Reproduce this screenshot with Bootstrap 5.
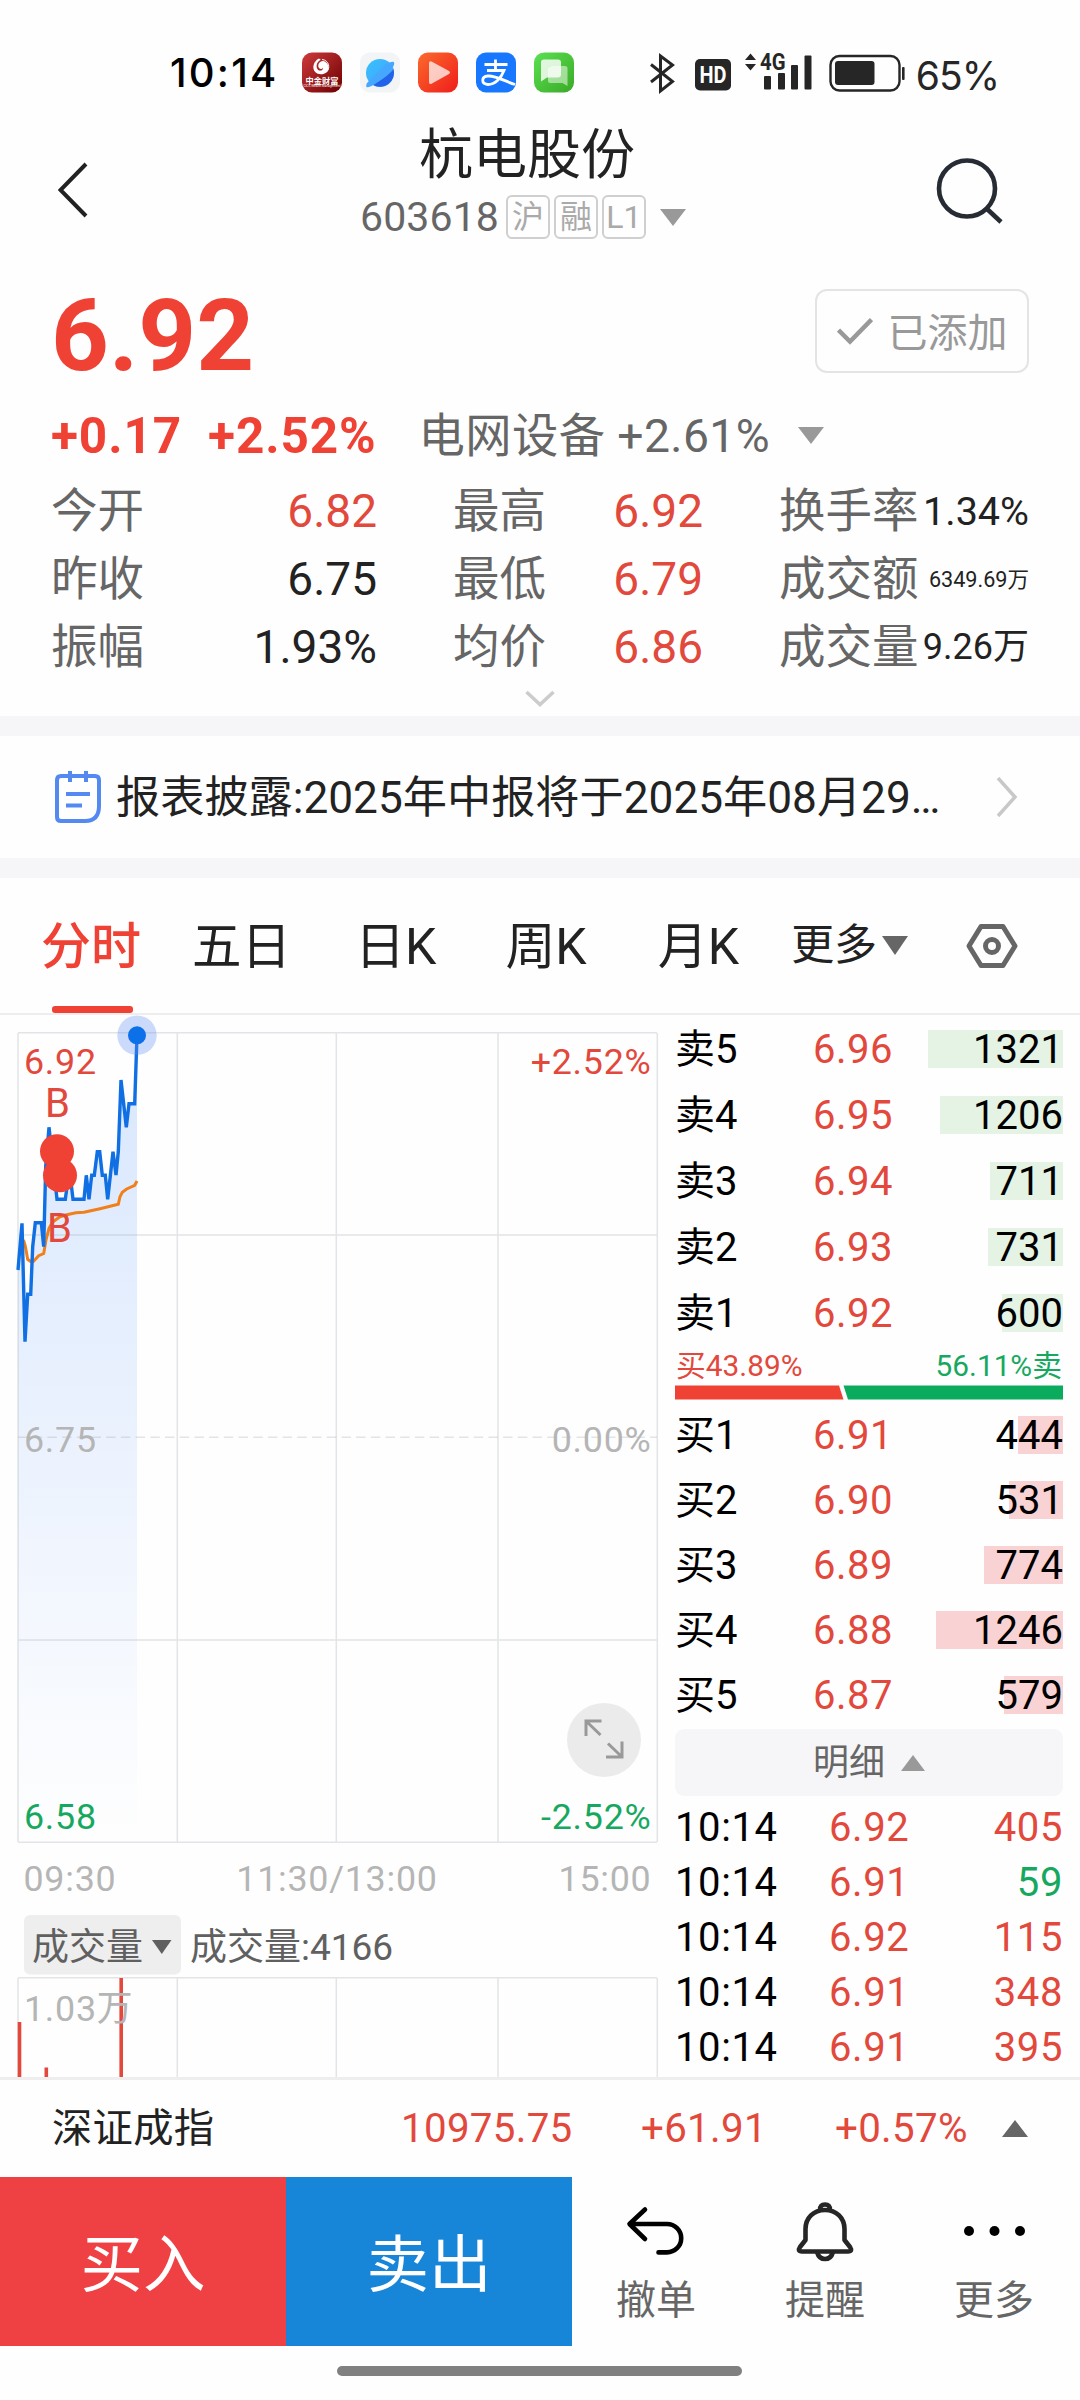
<!DOCTYPE html>
<html lang="zh-CN">
<head>
<meta charset="utf-8">
<meta name="viewport" content="width=device-width, initial-scale=1">
<title>杭电股份 603618</title>
<link rel="stylesheet" href="https://cdn.jsdelivr.net/npm/bootstrap@5.3.0/dist/css/bootstrap.min.css">
<style>
  body { width: 1080px; height: 2400px; overflow: hidden; background: #fefefe; color: #222; font-family: Roboto, "Noto Sans CJK SC", sans-serif; font-size: 40px; line-height: 1; }
  svg { display: block; flex: none; }
  svg text { font-family: Roboto, "Noto Sans CJK SC", sans-serif; }
  .up { color: #e2483b; }
  .down { color: #17a860; }

  .status { height: 110px; padding: 0 81px 0 170px; }
  .status .clock { font: 500 40px/70px Inter, sans-serif; color: #000; width: 132px; letter-spacing: 2.2px; padding-top: 38px; }
  .status .power { font: 400 39px/70px Inter, sans-serif; color: #262626; letter-spacing: -1px; padding-top: 41px; }

  .topbar { height: 150px; padding: 0 77px 0 58px; }
  .topbar h1 { font-size: 54px; line-height: 76px; font-weight: 400; padding: 8px 0 0 8px; }
  .topbar .code { font-size: 41px; line-height: 46px; letter-spacing: .1px; color: #666; }
  .flag { width: 44px; height: 44px; border: 2px solid #cfcfcf; border-radius: 6px; font-size: 32px; line-height: 40px; color: #aaa; text-align: center; letter-spacing: 0; }

  .quote { height: 456px; padding: 29px 51px 0 51px; }
  .last { font-size: 101px; line-height: 94px; height: 84px; font-weight: 700; color: #ef4134; }
  .added { width: 214px; height: 84px; border: 2px solid #e4e4e4; border-radius: 12px; font-size: 40px; line-height: 84px; color: #999; }
  .added span { padding-top: 5px; }
  .change { height: 72px; margin-top: 26px; font-size: 49.5px; line-height: 77px; font-weight: 700; color: #ef4134; letter-spacing: .9px; }
  .change span { padding-top: 2px; }
  .change .sector { font-size: 46.3px; font-weight: 400; color: #666; letter-spacing: .4px; }
  .stats { grid-template-columns: 326px 250px 250px; column-gap: 76px; margin-top: 5px; }
  .stat { height: 68px; line-height: 71px; font-size: 46px; }
  .stat .name { color: #666; font-size: 46.5px; white-space: nowrap; }

  .band { height: 20px; background: #f6f6f9; }
  .news { height: 122px; padding: 0 62px 0 54px; font-size: 44.2px; line-height: 126px; }
  .news span { padding-top: 2px; }

  .tabs { height: 137px; border-bottom: 2px solid #eee; font-size: 50px; line-height: 139px; }
  .tabs .tab { position: relative; height: 135px; }
  .tabs .on { font-weight: 500; color: #ef4134; }
  .tabs .on::after { content: ""; position: absolute; left: 11px; bottom: 0; width: 81px; height: 7px; border-radius: 3px; background: #ef4134; }

  .market { height: 1065px; border-bottom: 3px solid #eee; overflow: hidden; }
  .book { width: 388px; margin-left: 11px; padding-top: 2px; color: #000; }
  .lvl { height: 66px; line-height: 66px; font-size: 40px; }
  .lvl.bid { height: 65px; line-height: 65px; }
  .lvl .no { width: 138px; }
  .lvl .up { letter-spacing: .5px; }
  .depth { position: relative; }
  .depth i { position: absolute; right: 0; top: 13px; height: 38px; background: #e4f3e4; }
  .bid .depth i { background: #f9d3d3; }
  .depth b { position: relative; font-weight: 400; }
  .share { font-size: 29.8px; line-height: 38px; height: 38px; padding: 0 1px; }
  .detail { height: 67px; margin-top: 1px; border-radius: 9px; background: #f6f6f9; font-size: 36px; line-height: 74px; color: #666; }
  .tick { height: 55px; line-height: 58px; font-size: 40px; letter-spacing: .6px; }
  .tick .at { width: 154px; }

  .index { height: 97px; padding: 0 52px 0 52px; font-size: 40.3px; line-height: 104px; letter-spacing: .3px; }
  .trade { width: 286px; height: 169px; border-radius: 0; border: 0; color: #fff; font-size: 62.5px; line-height: 178px; padding: 0; }
  .buy { background: #ef4143; }
  .sell { background: #1886d8; }
  .act { height: 169px; width: 169px; font-size: 40px; color: #666; padding: 23px 1px 0 0; }
  .act span { line-height: 44px; margin-top: 15px; }
  .homebar { width: 405px; height: 10px; border-radius: 5px; background: #808080; margin: 20px 0 0 337px; }
</style>
<script src="https://cdn.jsdelivr.net/npm/bootstrap@5.3.0/dist/js/bootstrap.bundle.min.js"></script>
</head>
<body>

<div class="status d-flex align-items-start">
  <span class="clock">10:14</span>
  <svg width="272" height="110" viewBox="302 0 272 110">
    <defs>
      <linearGradient id="gr" x1="0" y1="0" x2="1" y2="1"><stop stop-color="#cf3a3c"/><stop offset="1" stop-color="#6d0000"/></linearGradient>
      <linearGradient id="go" x1="0" y1="0" x2="1" y2="1"><stop stop-color="#fb6a2c"/><stop offset="1" stop-color="#ef1d1b"/></linearGradient>
      <linearGradient id="gg" x1="0" y1="0" x2="1" y2="1"><stop stop-color="#5be052"/><stop offset="1" stop-color="#3aaa26"/></linearGradient>
      <linearGradient id="gb" x1="0" y1="0" x2="1" y2="1"><stop stop-color="#35c3fb"/><stop offset="1" stop-color="#4a9dff"/></linearGradient>
    </defs>
    <rect x="302" y="52.500" width="40" height="40" rx="10" fill="url(#gr)"/>
    <path fill="#fff" fill-rule="evenodd" d="M319 58.500c-8 4-7.500 15.500 2 15.800 9 0 10-11 2.500-13.300-4-.5-6.500 4-4.500 7 1 1.500 3.500 1.200 4-.6.800 3-4 4.600-5.600 1.600-1.800-3.500-.2-7.500 3.400-9.300z"/>
    <path d="M322 59.500c7 .5 9 9 4 13" fill="none" stroke="#fff" stroke-width="1"/>
    <text x="322" y="83.500" font-size="8.200" font-weight="700" fill="#fff" text-anchor="middle">中金财富</text>
    <text x="322" y="86.500" font-size="3.200" fill="#fff" text-anchor="middle">CICC Wealth Management</text>
    <rect x="360" y="52.500" width="40" height="40" rx="10" fill="#f3f4f5"/>
    <circle cx="380" cy="73" r="14" fill="url(#gb)"/>
    <path d="M393.500 69a14 14 0 0 1-21 15.600C382 80 389 75 393.500 69z" fill="#2462ea"/>
    <path d="M367 83c-3 7 3 4 8 1 8-5 15-12 18-17 4-8-3-5-7-3" fill="#46a7ff"/>
    <rect x="418" y="52.500" width="40" height="40" rx="10" fill="url(#go)"/>
    <path d="M429 63.500q0-3.500 3-1.700l17 9.200q2 1.500 0 3l-17 9.500q-3 1.500-3-1.500z" fill="#fff" opacity=".72"/>
    <rect x="476" y="52.500" width="40" height="40" rx="10" fill="#1777ff"/>
    <g fill="none" stroke="#fff" stroke-width="2.800"><path d="M484.500 64.500h23M495.500 59.500v10M487 70.500h17c-3 8-9 14-16 14-7-.5-7-8 0-8.500 8-.5 16 5 27 8.500"/></g>
    <rect x="534" y="52.500" width="40" height="40" rx="10" fill="url(#gg)"/>
    <path d="M553 66h12q2.500 0 2.500 2.500V86l-5-3H550q-2-.2-2-2V68z" fill="#fff" opacity=".5"/>
    <path d="M544 59.500h14q3 0 3 3v12q0 3-3 3h-11l-6 4V62q0-2.500 3-2.500z" fill="#fff" opacity=".82"/>
  </svg>
  <svg class="ms-auto" width="266" height="110" viewBox="643 0 266 110" fill="#262626">
    <path d="M652 64.500l21.500 17-12 9.500V56l12 9-21.500 17" fill="none" stroke="#262626" stroke-width="3"/>
    <rect x="696" y="59" width="36" height="31.500" rx="5"/>
    <text x="714" y="83" font-size="24" font-weight="700" fill="#fff" text-anchor="middle" textLength="27" lengthAdjust="spacingAndGlyphs">HD</text>
    <path d="M751.500 53.500l5.500 6.500h-11zM751.500 70.500l5.500-6.500h-11z"/>
    <text x="761" y="70" font-size="23" font-weight="700" textLength="25.500" lengthAdjust="spacingAndGlyphs">4G</text>
    <rect x="765" y="76" width="7" height="13.500" rx="1"/><rect x="779" y="73" width="7" height="16.500" rx="1"/><rect x="792" y="65" width="7" height="24.500" rx="1"/><rect x="805.500" y="55.500" width="7" height="34" rx="1"/>
    <rect x="831.500" y="56" width="69" height="34.500" rx="9" fill="none" stroke="#262626" stroke-width="2.400"/>
    <rect x="836" y="61" width="39.500" height="24" rx="3"/><rect x="903" y="67" width="2.600" height="13" rx="1"/>
  </svg>
  <span class="power ps-2">65%</span>
</div>

<header class="topbar d-flex justify-content-between">
  <svg width="32" height="150" viewBox="58 110 32 150"><path d="M86 164L60.500 190 86 216" fill="none" stroke="#222" stroke-width="4"/></svg>
  <div class="d-flex flex-column align-items-center ms-3 ps-1">
    <h1 class="m-0">杭电股份</h1>
    <div class="code d-flex align-items-center">603618<span class="flag" style="margin-left:7px">沪</span><span class="flag ms-1">融</span><span class="flag ms-1">L1</span>
      <svg style="margin-left:14px" width="26" height="17" viewBox="0 0 26 17"><path d="M0 0h26L13 17z" fill="#999"/></svg></div>
  </div>
  <svg width="67" height="150" viewBox="936 110 67 150" fill="none" stroke="#272b33" stroke-width="4.600"><circle cx="967" cy="188.500" r="28"/><path d="M986 208l15 14"/></svg>
</header>

<section class="quote">
  <div class="d-flex justify-content-between">
    <div class="last">6.92</div>
    <div class="added d-flex align-items-center justify-content-center">
      <svg width="36" height="28" viewBox="0 0 36 28"><path d="M1.500 13L13 24.500 34.500 2.500" fill="none" stroke="#999" stroke-width="4.500"/></svg>
      <span style="margin-left:15px">已添加</span>
    </div>
  </div>
  <div class="change d-flex align-items-center">
    <span>+0.17</span><span style="margin-left:26px">+2.52%</span>
    <span class="sector" style="margin-left:42px">电网设备 +2.61%</span>
    <svg style="margin-left:28px" width="26" height="17" viewBox="0 0 26 17"><path d="M0 0h26L13 17z" fill="#999"/></svg>
  </div>
  <div class="stats d-grid">
    <div class="stat d-flex justify-content-between"><span class="name">今开</span><span class="up">6.82</span></div>
    <div class="stat d-flex justify-content-between"><span class="name">最高</span><span class="up">6.92</span></div>
    <div class="stat d-flex justify-content-between"><span class="name">换手率</span><span style="font-size:39.5px">1.34%</span></div>
    <div class="stat d-flex justify-content-between"><span class="name">昨收</span><span>6.75</span></div>
    <div class="stat d-flex justify-content-between"><span class="name">最低</span><span class="up">6.79</span></div>
    <div class="stat d-flex justify-content-between"><span class="name">成交额</span><span style="font-size:21.6px">6349.69万</span></div>
    <div class="stat d-flex justify-content-between"><span class="name">振幅</span><span>1.93%</span></div>
    <div class="stat d-flex justify-content-between"><span class="name">均价</span><span class="up">6.86</span></div>
    <div class="stat d-flex justify-content-between"><span class="name">成交量</span><span style="font-size:36px">9.26万</span></div>
  </div>
  <svg class="mx-auto" style="margin-top:10px" width="30" height="17" viewBox="0 0 30 17"><path d="M1.500 2L15 14.500 28.500 2" fill="none" stroke="#ccc" stroke-width="3.500"/></svg>
</section>

<div class="band"></div>
<div class="news d-flex align-items-center">
  <svg width="48" height="54" viewBox="54 770 48 54" fill="none" stroke="#5389f1" stroke-width="4"><path d="M61 776h34q4 0 4 4v26q0 15-14 15H61q-4 0-4-4v-37q0-4 4-4zM70 771v11M86 771v11M66 794h24M66 805.500h16"/></svg>
  <span style="margin-left:14px">报表披露:2025年中报将于2025年08月29…</span>
  <svg class="ms-auto" width="22" height="40" viewBox="0 0 22 40"><path d="M2 1l17 19L2 39" fill="none" stroke="#c8c8c8" stroke-width="3.500"/></svg>
</div>
<div class="band"></div>

<nav class="tabs d-flex align-items-center">
  <span class="tab on" style="margin-left:41px">分时</span>
  <span class="tab" style="margin-left:51px;font-size:49.500px">五日</span>
  <span class="tab" style="margin-left:64px">日K</span>
  <span class="tab" style="margin-left:69px">周K</span>
  <span class="tab" style="margin-left:71px">月K</span>
  <span class="tab d-flex align-items-center" style="margin-left:52px;font-size:43px">更多<svg style="margin-left:5px" width="26" height="19" viewBox="0 0 26 19"><path d="M0 0h26L13 19z" fill="#666"/></svg></span>
  <svg class="ms-auto" style="margin-right:50px" width="76" height="48" viewBox="954 921 76 48" fill="none" stroke="#666" stroke-width="5"><path d="M981 925.500h22l12 19.500-12 19.500h-22L969 945z" stroke-linejoin="round"/><circle cx="992" cy="945" r="6.500"/></svg>
</nav>

<main class="market d-flex">
  <svg width="664" height="1062" viewBox="0 1015 664 1062">
    <defs><linearGradient id="area" gradientUnits="userSpaceOnUse" x1="0" y1="1035" x2="0" y2="1842"><stop stop-color="#d8e7fd"/><stop offset=".5" stop-color="#ebf2fe"/><stop offset="1" stop-color="#fefefe"/></linearGradient></defs>
    <path fill="url(#area)" d="M18 1270L22 1223.300 25 1341.700 27.700 1294.300H30.700L32.700 1246.700 35.300 1222.700H41.300L43.700 1246.700 45.700 1166.700 49 1127.300 54.300 1175 57 1199.300H65.300L68 1180H70.700L73 1199.300H84L86.300 1175.300 89 1199.300 91.700 1175.300H94.300L97.300 1151.700H99.700L102.300 1175.300H105.300L107.700 1199.300 113 1151.700 116 1175 118.300 1151.700 121 1080 126.300 1127.300 129 1103.700H134.700L137 1035.300V1842H18z"/>
    <g stroke="#808a96" stroke-opacity=".22" stroke-width="1.500" fill="none">
      <path d="M18 1032.800H657M18 1235H657M18 1640H657M18 1842.300H657M18 1033V1842M177.300 1033V1842M336.300 1033V1842M498 1033V1842M657.300 1033V1842"/>
      <path d="M18 1437.300H657" stroke-dasharray="9.500 5.200"/>
      <path d="M18 1977.800H657M18 1978V2078M177.300 1978V2078M336.300 1978V2078M498 1978V2078M657.300 1978V2078"/>
    </g>
    <path fill="none" stroke="#f0801c" stroke-width="3" d="M23.500 1240L25.300 1246 27.700 1259.300 30.700 1261.500H33.300L38.700 1255.700 43.700 1253.500 46 1240 49 1228.300 52.700 1222 60 1216.700 66.700 1214.700 76 1212.700 84 1212.300 100 1208.700 118.300 1204.300 120 1196.700 122.300 1192.300 126.700 1189 134.700 1185.300 137 1181"/>
    <path fill="none" stroke="#1070e3" stroke-width="3.400" d="M18 1270L22 1223.300 25 1341.700 27.700 1294.300H30.700L32.700 1246.700 35.300 1222.700H41.300L43.700 1246.700 45.700 1166.700 49 1127.300 54.300 1175 57 1199.300H65.300L68 1180H70.700L73 1199.300H84L86.300 1175.300 89 1199.300 91.700 1175.300H94.300L97.300 1151.700H99.700L102.300 1175.300H105.300L107.700 1199.300 113 1151.700 116 1175 118.300 1151.700 121 1080 126.300 1127.300 129 1103.700H134.700L137 1035.300"/>
    <circle cx="137" cy="1035.300" r="19.700" fill="#5a8cf5" fill-opacity=".31"/><circle cx="137" cy="1035.300" r="9" fill="#0c70e8"/>
    <g fill="#ef4134"><circle cx="57" cy="1151.300" r="17"/><circle cx="60" cy="1175.300" r="17"/></g>
    <g font-size="40" fill="#e2483b"><text x="45" y="1116.700">B</text><text x="47" y="1241.700">B</text></g>
    <g font-size="35.800" letter-spacing=".75">
      <text x="24" y="1074" fill="#e2483b">6.92</text><text x="651.500" y="1074" fill="#e2483b" text-anchor="end">+2.52%</text>
      <text x="24" y="1451.500" fill="#b5b5b5">6.75</text><text x="651.500" y="1451.500" fill="#b5b5b5" text-anchor="end">0.00%</text>
      <text x="24" y="1828.500" fill="#17a860">6.58</text><text x="651.500" y="1828.500" fill="#17a860" text-anchor="end">-2.52%</text>
      <g fill="#b5b5b5"><text x="23.500" y="1891">09:30</text><text x="337" y="1891" text-anchor="middle">11:30/13:00</text><text x="651.500" y="1891" text-anchor="end">15:00</text></g>
    </g>
    <circle cx="604" cy="1740" r="37" fill="#ebebeb"/>
    <path d="M601.500 1721H586V1736M586.500 1721.500L600.500 1735M606 1757H622V1741.500M621.500 1756.500L608 1743.500" fill="none" stroke="#999" stroke-width="3"/>
    <rect x="24" y="1915" width="157" height="59.500" rx="6" fill="#eee"/>
    <g font-size="37" fill="#606060"><text x="32" y="1959.500">成交量</text><text x="190" y="1959.500">成交量:4166</text></g>
    <path d="M152 1940h19.500l-9.700 14z" fill="#606060"/>
    <path d="M19.500 2022V2078M46.300 2067.500V2078M121.200 1978V2078" stroke="#e2483b" stroke-width="3.600"/>
    <text x="24" y="2020.500" font-size="35.800" fill="#b5b5b5" letter-spacing=".75">1.03万</text>
  </svg>

  <div class="book">
    <div class="lvl d-flex"><span class="no">卖5</span><span class="up">6.96</span><span class="depth ms-auto"><i style="width:135px"></i><b>1321</b></span></div>
    <div class="lvl d-flex"><span class="no">卖4</span><span class="up">6.95</span><span class="depth ms-auto"><i style="width:123px"></i><b>1206</b></span></div>
    <div class="lvl d-flex"><span class="no">卖3</span><span class="up">6.94</span><span class="depth ms-auto"><i style="width:73px"></i><b>711</b></span></div>
    <div class="lvl d-flex"><span class="no">卖2</span><span class="up">6.93</span><span class="depth ms-auto"><i style="width:75px"></i><b>731</b></span></div>
    <div class="lvl d-flex"><span class="no">卖1</span><span class="up">6.92</span><span class="depth ms-auto"><i style="width:61px"></i><b>600</b></span></div>
    <div class="share d-flex justify-content-between"><span class="up">买43.89%</span><span class="down">56.11%卖</span></div>
    <svg width="388" height="18" viewBox="0 0 388 18"><path d="M0 .500H164L168.500 14.500H0z" fill="#ef4134"/><path d="M168.500 .500H388V14.500H173z" fill="#0aab5c"/></svg>
    <div class="lvl bid d-flex"><span class="no">买1</span><span class="up">6.91</span><span class="depth ms-auto"><i style="width:45px"></i><b>444</b></span></div>
    <div class="lvl bid d-flex"><span class="no">买2</span><span class="up">6.90</span><span class="depth ms-auto"><i style="width:54px"></i><b>531</b></span></div>
    <div class="lvl bid d-flex"><span class="no">买3</span><span class="up">6.89</span><span class="depth ms-auto"><i style="width:79px"></i><b>774</b></span></div>
    <div class="lvl bid d-flex"><span class="no">买4</span><span class="up">6.88</span><span class="depth ms-auto"><i style="width:127px"></i><b>1246</b></span></div>
    <div class="lvl bid d-flex"><span class="no">买5</span><span class="up">6.87</span><span class="depth ms-auto"><i style="width:59px"></i><b>579</b></span></div>
    <div class="detail d-flex align-items-center justify-content-center">明细<svg class="ms-3" width="24" height="16" viewBox="0 0 24 16"><path d="M12 0l12 16H0z" fill="#999"/></svg></div>
    <div style="padding-top:3px">
      <div class="tick d-flex"><span class="at">10:14</span><span class="up">6.92</span><span class="up ms-auto">405</span></div>
      <div class="tick d-flex"><span class="at">10:14</span><span class="up">6.91</span><span class="down ms-auto">59</span></div>
      <div class="tick d-flex"><span class="at">10:14</span><span class="up">6.92</span><span class="up ms-auto">115</span></div>
      <div class="tick d-flex"><span class="at">10:14</span><span class="up">6.91</span><span class="up ms-auto">348</span></div>
      <div class="tick d-flex"><span class="at">10:14</span><span class="up">6.91</span><span class="up ms-auto">395</span></div>
    </div>
  </div>
</main>

<div class="index d-flex align-items-center">
  <span style="width:349px">深证成指</span>
  <span class="up" style="width:240px">10975.75</span>
  <span class="up" style="width:194px">+61.91</span>
  <span class="up">+0.57%</span>
  <svg class="ms-auto" width="26" height="17" viewBox="0 0 26 17"><path d="M13 0l13 17H0z" fill="#666"/></svg>
</div>

<footer class="d-flex">
  <button class="btn trade buy">买入</button>
  <button class="btn trade sell">卖出</button>
  <div class="act d-flex flex-column align-items-center">
    <svg width="62" height="64" viewBox="625 2200 62 64" fill="none" stroke="#000" stroke-width="4.600" stroke-linecap="round" stroke-linejoin="round"><path d="M645 2209.500L629.500 2224 645 2239M630 2224H667a14.200 14.200 0 0 1 0 28.400H658.500"/></svg>
    <span>撤单</span>
  </div>
  <div class="act d-flex flex-column align-items-center">
    <svg width="62" height="64" viewBox="793.500 2200 62 64" fill="none" stroke="#262626" stroke-width="4.600" stroke-linejoin="round"><path d="M805 2229c0-11 8-19 19.500-19s19.500 8 19.500 19v11l5.500 7q3 4.500-2 4.500H801.500q-5 0-2-4.500l5.500-7zM819.500 2210q0-5.500 5-5.500t5 5.500M816.500 2252q2 7 8 7t8-7"/></svg>
    <span>提醒</span>
  </div>
  <div class="act d-flex flex-column align-items-center">
    <svg width="62" height="64" viewBox="963.500 2200 62 64"><circle cx="969.500" cy="2231" r="5"/><circle cx="995" cy="2231" r="5"/><circle cx="1020.500" cy="2231" r="5"/></svg>
    <span>更多</span>
  </div>
</footer>
<div class="homebar"></div>
</body>
</html>
